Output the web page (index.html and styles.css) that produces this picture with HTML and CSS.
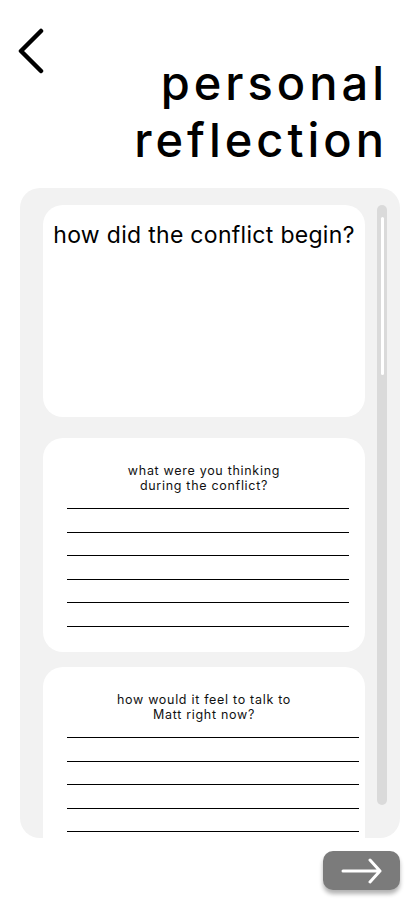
FILE: index.html
```
<!DOCTYPE html>
<html lang="en">
<head>
    <meta charset="UTF-8">
    <meta name="viewport" content="width=device-width, initial-scale=1.0">
    <title>Personal reflection</title>
    <link rel="stylesheet" href="styles.css">
</head>
<body>

    <div class="page">

        <div class="header">
            <button class="back" type="button" aria-label="back">
                <svg width="27" height="46" viewBox="0 0 27 46">
                    <path d="M24 3 L4 23 L24 43" fill="none" stroke="#000" stroke-width="4.5" stroke-linecap="round" stroke-linejoin="round"/>
                </svg>
            </button>
            <h1 class="title">personal<br>reflection</h1>
        </div>

        <div class="panel">
            <div class="cards">

                <div class="card card-big">
                    <p class="question-big">how did the conflict begin?</p>
                </div>

                <div class="card card-lines">
                    <p class="question">what were you thinking<br>during the conflict?</p>
                    <div class="lines">
                        <div class="line"></div>
                        <div class="line"></div>
                        <div class="line"></div>
                        <div class="line"></div>
                        <div class="line"></div>
                        <div class="line"></div>
                    </div>
                </div>

                <div class="card card-lines card-last">
                    <p class="question">how would it feel to talk to<br>Matt right now?</p>
                    <div class="lines">
                        <div class="line"></div>
                        <div class="line"></div>
                        <div class="line"></div>
                        <div class="line"></div>
                        <div class="line"></div>
                        <div class="line"></div>
                    </div>
                </div>

            </div>
            <div class="track">
                <div class="thumb"></div>
            </div>
        </div>

        <div class="footer">
            <button class="next" type="button" aria-label="next">
                <svg width="42" height="26" viewBox="0 0 42 26">
                    <path d="M2 13 H39 M29 2 L39 13 L29 24" fill="none" stroke="#fff" stroke-width="3" stroke-linecap="round" stroke-linejoin="round"/>
                </svg>
            </button>
        </div>

    </div>

</body>
</html>
```

FILE: styles.css
```
body {
    margin: 0;
    background-color: #fff;
    font-family: Inter, sans-serif;
    color: #000;
}

.page {
    width: 418px;
    height: 908px;
    display: flex;
    flex-direction: column;
    overflow: hidden;
}

.header {
    display: flex;
    justify-content: space-between;
    align-items: flex-start;
    padding: 28px 30px 0 17px;
}

.back {
    background: none;
    border: none;
    padding: 0;
    margin: 0;
    cursor: pointer;
    display: flex;
}

.title {
    margin: 26px 0 0 0;
    text-align: right;
    font-size: 47px;
    font-weight: 500;
    line-height: 57px;
    letter-spacing: 4px;
}

.panel {
    margin: 20px 18px 0 20px;
    height: 650px;
    background-color: #f2f2f2;
    border-radius: 20px;
    display: flex;
    overflow: hidden;
}

.cards {
    width: 322px;
    padding: 17px 0 0 23px;
    display: flex;
    flex-direction: column;
    gap: 21px;
}

.card {
    background-color: #fff;
    border-radius: 20px;
    flex-shrink: 0;
}

.card-big {
    height: 212px;
}

.question-big {
    margin: 15px 0 0 0;
    text-align: center;
    font-size: 23px;
    line-height: 30px;
    letter-spacing: 0.3px;
}

.card-lines {
    height: 214px;
}

.card-last {
    margin-top: -6px;
}

.question {
    margin: 25px 0 0 0;
    text-align: center;
    font-size: 12.5px;
    line-height: 15px;
    letter-spacing: 0.7px;
    color: #111;
}

.lines {
    margin: 15px 16px 0 24px;
}

.card-last .lines {
    margin-right: 6px;
}

.line {
    height: 22.6px;
    border-top: 1px solid #000;
}

.track {
    margin: 17px 0 0 12px;
    width: 10px;
    height: 600px;
    background-color: #dadada;
    border-radius: 5px;
    display: flex;
    justify-content: center;
}

.thumb {
    margin-top: 12px;
    width: 3px;
    height: 158px;
    background-color: #fff;
    border-radius: 2px;
}

.footer {
    display: flex;
    justify-content: flex-end;
    padding: 13px 18px 0 0;
}

.next {
    width: 77px;
    height: 39px;
    background-color: #7b7b7b;
    border: none;
    border-radius: 10px;
    box-shadow: 0 4px 4px rgba(0, 0, 0, 0.3);
    display: flex;
    align-items: center;
    justify-content: center;
    cursor: pointer;
    padding: 0;
}
```
